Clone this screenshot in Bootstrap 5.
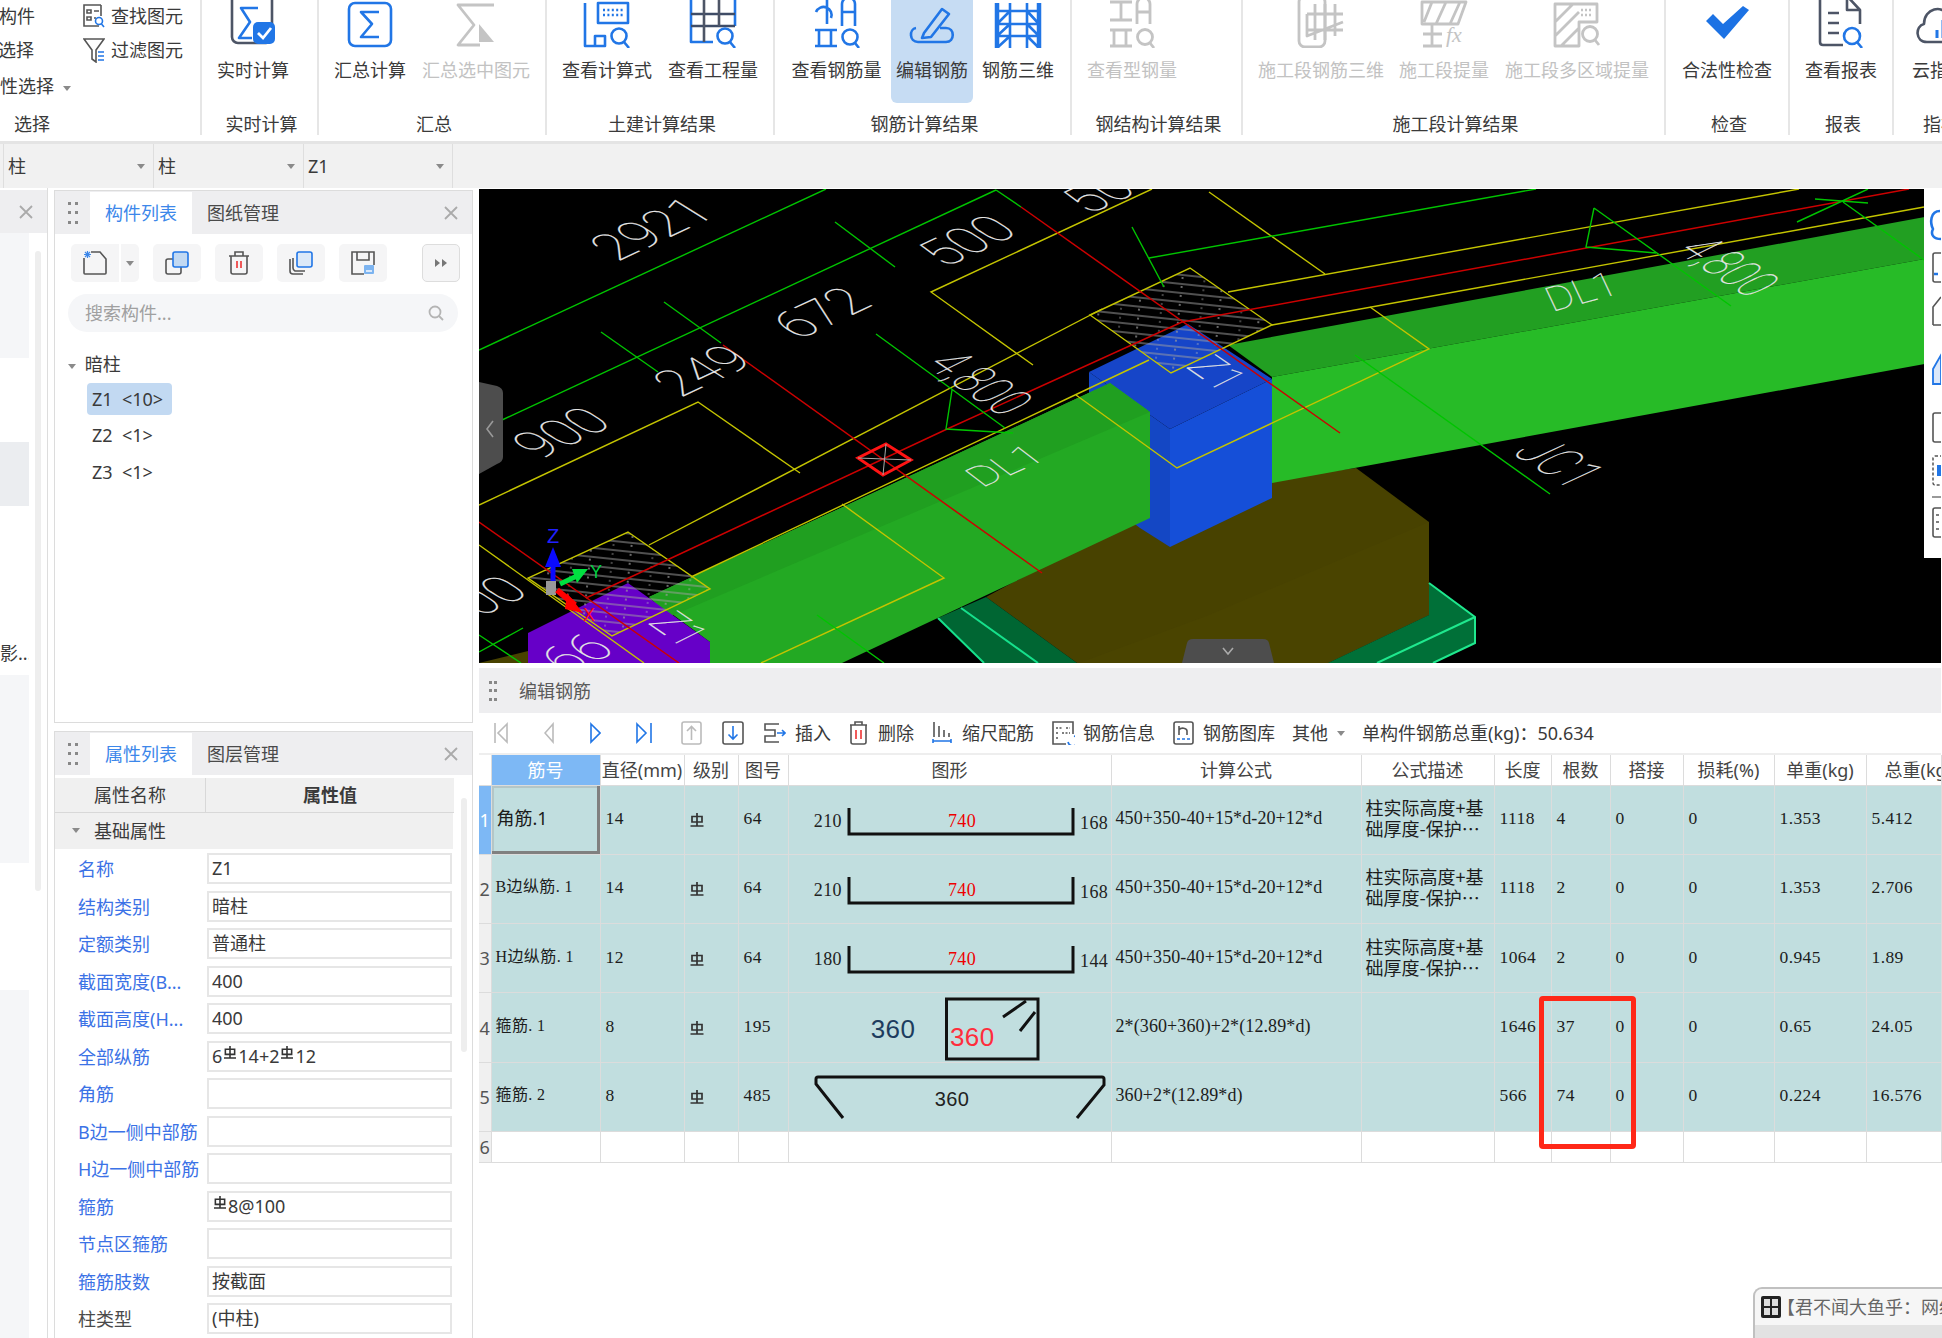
<!DOCTYPE html>
<html lang="zh-CN">
<head>
<meta charset="utf-8">
<title>编辑钢筋</title>
<link href="https://cdn.jsdelivr.net/npm/bootstrap@5.3.0/dist/css/bootstrap.min.css" rel="stylesheet">
<style>
html,body{margin:0;height:100%;background:#fff}
.app{width:1942px;height:1338px;overflow:hidden;position:relative;font-family:"Noto Sans","Noto Sans CJK SC",sans-serif;font-size:18px;line-height:24px;color:#3a3a3a;background:#fff}
svg{display:block;flex-shrink:0;overflow:hidden}
.st{fill:none;stroke:#2176e6;stroke-width:2.6;stroke-linejoin:round}
.sd{fill:none;stroke:#4d5566;stroke-width:2.6;stroke-linejoin:round}
.sg{fill:none;stroke:#c4c4c4;stroke-width:2.8;stroke-linejoin:round}
.sb{fill:none;stroke:#2176e6;stroke-width:1.6}
.sk{fill:none;stroke:#555;stroke-width:1.6}
.sm{fill:none;stroke:#bbb;stroke-width:1.6}
/* ribbon */
.rib{height:144px;border-bottom:3px solid #e4e4e4;overflow:hidden;background:#fff}
.rg-grp{height:135px;border-right:2px solid #e6e6e6;flex-shrink:0}
.rg-body{height:103px}
.rg-lab{height:32px;line-height:32px;margin-top:5px;text-align:center;padding-left:4px}
.rg-lab0{text-align:left;padding-left:14px}
.rb-it{white-space:nowrap;height:103px;flex-shrink:0}
.rb-it span{margin-top:10px;line-height:24px}
.rb-off{color:#c2c2c2}
.rb-on{background:#c6dcf3;border-radius:0 0 6px 6px}
.g0{width:202px}.g1{width:117px}.g2{width:228px}.g3{width:228px;}.g4{width:297px}.g5{width:171px}.g6{width:423px}.g7{width:124px}.g8{width:104px}.g9{width:100px;border-right:0}
.p3{padding-left:9px}.p4{padding-left:7px}.p5{padding-left:10px}.p6{padding-left:13px}
.wi-102{width:102px}.wi-110{width:110px}.wi-109{width:109px}.wi-82{width:82px}.wi-90{width:90px}.wi-g100{width:100px}.wi-130{width:130px}.wi-116{width:116px}.wi-150{width:150px}.wi-fill{width:100%}
.sel-c1{width:83px;white-space:nowrap}
.sel-c1>div:nth-child(1){height:33px;line-height:33px;margin-left:-1px}
.sel-c1>div:nth-child(2){height:35px;line-height:35px;margin-left:-2px}
.sel-c1>div:nth-child(3){height:37px;line-height:37px;margin-left:-18px}
.sel-c2>div{gap:6px;white-space:nowrap}
.sel-c2>div:nth-child(1){height:31px}
.sel-c2>div:nth-child(2){height:37px}
.tri{display:inline-block;width:0;height:0;border-left:4px solid transparent;border-right:4px solid transparent;border-top:5px solid #8a8a8a;vertical-align:middle}
/* combo bar */
.combo{height:44px;background:#f1f1f1;padding-left:3px}
.combo-it{width:150px;border-left:1px solid #dedede;padding:0 8px 0 4px;line-height:44px}
.combo-it:last-child{border-right:1px solid #dedede}
/* main */
.main-w{height:1150px}
.stub{width:48px;border-right:1px solid #ddd;flex-shrink:0}
.stub-h{height:43px;margin-top:2px;background:#eeeef0;padding-right:14px}
.stub-b{height:1105px}
.stub-col{width:29px;font-size:18px}
.sc1{height:125px;background:#f5f6f8}.sc2{height:84px}.sc3{height:64px;background:#ebedf0}.sc4{height:169px;line-height:295px;text-align:right;white-space:nowrap;overflow:hidden}.sc5{height:188px;background:#f5f6f8}.sc6{height:127px}.sc7{height:348px;background:#f5f6f8}
.stub-sb{width:6px;height:640px;margin:18px 0 0 6px;background:#eeeeee;border-radius:3px}
.mid{width:419px;margin-left:6px;flex-shrink:0}
.pan{border:1px solid #dcdcdc;margin-top:2px}
.pan-a{height:533px}
.pan-b{height:620px;margin-top:8px;border-bottom:0}
.pan-h{height:43px;background:#eeeef0;padding-right:14px}
.grip{width:35px}
.tab-a,.tab-n{width:102px;text-align:center;line-height:43px;margin-top:1px}
.tab-a{background:#fff;color:#3c87ea}
.tab-n{color:#4a4a4a}
.tbtns{padding:10px 0 0 16px;height:53px}
.pbt{height:38px;width:48px;background:#f5f5f6;border-radius:5px;margin-right:14px;flex-shrink:0}
.pbt-n{margin-right:2px;border-radius:5px 0 0 5px}
.pbt-c{width:18px;border-radius:0 5px 5px 0;margin-right:14px}
.pbt-r{width:38px;margin:0 0 0 21px;border:1px solid #ddd}
.srch{margin:7px 14px 0 13px;height:38px;border-radius:19px;background:#f5f6f8;color:#a0a0a0;padding:0 14px 0 17px}
.tree{padding-top:16px;padding-left:13px}
.tree-r{height:32px;line-height:32px}
.tree-i{margin-left:19px;height:32px;line-height:32px;padding:0 5px;white-space:pre;display:inline-block;border-radius:4px}
.tree-s{background:#c2d9f2;width:85px;margin-top:3px}
.tree-n{margin-top:4px;display:block;width:85px}
.tree-n+.tree-n{margin-top:5px}
.pg-head{height:35px;background:#f0f0f0;margin-top:3px;width:399px;border-bottom:1px solid #d8d8d8}
.pg-h1{width:151px;text-align:center;line-height:34px;border-right:1px solid #d8d8d8}
.pg-h2{flex:1;text-align:center;line-height:34px;font-weight:600}
.pg-grp{height:36px;width:398px;background:#f0f0f0;line-height:36px;padding-left:17px}
.pg-grp .tri{margin-right:14px;position:relative;top:-3px}
.pg-row{height:37.5px;width:398px}
.pg-first{margin-top:4px}
.pg-l{width:152px;padding-left:23px;color:#3b72e6;white-space:nowrap;line-height:33px}
.pg-dk{color:#4a4a4a}
.pg-v{width:245px;height:31px;border:2px solid #e6e6e6;line-height:27px;padding-left:3px;white-space:nowrap}
.pg-sb{width:6px;height:254px;background:#eee;border-radius:3px;position:absolute;left:406px;top:20px}
.pg-wrap{position:relative}
.rs{display:inline-block;vertical-align:4px;margin:0 1px}
/* right column */
.right{width:1462px;margin-left:6px;flex-shrink:0;position:relative}
.cv-w{height:474px;margin-top:1px;position:relative;background:#000}
.palette{position:absolute;right:0;top:0;width:17px;height:369px;background:#fff}
.rb-h{height:45px;margin-top:5px;background:#eeeef0;color:#5a5a5a}
.rb-h .grip2{width:40px;padding-left:10px}
.rbar{height:42px;border-bottom:2px solid #eee;white-space:nowrap}
.rbar>:nth-child(1){margin-left:15px}.rbar>:nth-child(2){margin-left:36px}.rbar>:nth-child(3){margin-left:36px}.rbar>:nth-child(4){margin-left:35px}.rbar>:nth-child(5){margin-left:29px}.rbar>:nth-child(6){margin-left:20px}.rbar>:nth-child(7){margin-left:20px}.rbar>:nth-child(8){margin-left:9px}.rbar>:nth-child(9){margin-left:18px}.rbar>:nth-child(10){margin-left:10px}.rbar>:nth-child(11){margin-left:18px}.rbar>:nth-child(12){margin-left:10px}.rbar>:nth-child(13){margin-left:18px}.rbar>:nth-child(14){margin-left:8px}.rbar>:nth-child(15){margin-left:18px}.rbar>:nth-child(16){margin-left:9px}.rbar>:nth-child(17){margin-left:17px}.rbar>:nth-child(18){margin-left:9px}.rbar>:nth-child(19){margin-left:17px}
.grid-w{position:relative}
.rgt{table-layout:fixed;width:1462px;border-collapse:collapse;margin:0}
.rgt>tbody>tr>td,.rgt>thead>tr>th{padding:0;border:0;border-right:1.5px solid #dcdcdc;border-bottom:1.5px solid #dcdcdc;overflow:hidden;white-space:nowrap;font-weight:400;vertical-align:middle;box-shadow:none}
.rgt>thead>tr>th{background:#fff;height:30px;text-align:center;line-height:28px;color:#444}
.rgt>thead>tr>th.hc{background:#7db8f5;color:#fff}
.rgt>thead>tr>th.tl{text-align:left;padding-left:18px}
.rgt>tbody>tr.dt>td{background:#c1dedf;height:69.33px;color:#1c1c1c;font-family:"Liberation Serif","Noto Sans CJK SC",serif;font-size:17.5px;letter-spacing:.4px;padding-left:5px;line-height:20px;padding-bottom:3px}
.rgt>tbody>tr.em>td{background:#fff;height:31px}
.rgt>tbody>tr>td.rh{background:#f0f0f0;padding:0;text-align:center;font-family:"Noto Sans",sans-serif;font-size:18px;letter-spacing:0;color:#555;overflow:hidden}
.rgt>tbody>tr>td.rh-on{background:#7db8f5;color:#fff}
.rgt>tbody>tr>td.selc{font-family:"Noto Sans","Noto Sans CJK SC",sans-serif;font-size:18px;letter-spacing:0;box-shadow:inset -3px -3px 0 #808080,inset 2px 2px 0 #b4c6c7}
.rgt>tbody>tr>td.nm{font-family:"Liberation Serif","Noto Sans CJK SC",serif;font-size:16px;letter-spacing:.4px;padding-left:4px}
.rgt>tbody>tr>td.fm{font-size:18px;letter-spacing:.1px;padding-left:4px}
.rgt>tbody>tr>td.ds{font-family:"Noto Sans CJK SC",sans-serif;font-size:18px;letter-spacing:0;line-height:21px;padding-left:4px}
.rgt>tbody>tr>td.fg{padding:0}
.c0{width:12px}.c1{width:109px}.c2{width:84px}.c3{width:54px}.c4{width:50px}.c5{width:323px}.c6{width:250px}.c7{width:133px}.c8{width:57px}.c9{width:59px}.c10{width:73px}.c11{width:91px}.c12{width:92px}.c13{width:75px}
.redbox{position:absolute;left:1060px;top:241px;width:97px;height:153px;border:5px solid #ff2818;border-radius:4px}
.toast-b{position:absolute;left:1753px;top:1287px;width:189px;height:51px;background:#e2e2e2;border:2px solid #c0c0c0;border-right:0;border-bottom:0;border-top-left-radius:9px;overflow:hidden}
.toast-t{height:36px;background:#f6f6f6;padding-left:6px;white-space:nowrap;color:#666;line-height:36px}
.toast-t span{margin-left:-4px}
.cad{fill:#e4e4e4;stroke:#e4e4e4;stroke-width:.03;font-family:"Roboto","Liberation Sans",sans-serif;font-weight:100;font-size:10px}
.fgt{font-family:"Liberation Serif",serif;font-size:18px;fill:#222}
.fgr{font-family:"Liberation Serif",serif;font-size:18px;fill:#ee0000}
.ln{fill:none}
.ye{stroke:#c4c400;stroke-width:1.4}.rd{stroke:#cc0000;stroke-width:1.5}.gr{stroke:#00c400;stroke-width:1.4}
</style>
</head>
<body>
<div class="app">

<div class="rib d-flex">
  <div class="rg-grp g0">
    <div class="rg-body d-flex">
      <div class="sel-c1 overflow-hidden"><div>构件</div><div>选择</div><div>属性选择 <span class="tri ms-1"></span></div></div>
      <div class="sel-c2">
        <div class="d-flex align-items-center"><svg width="22" height="24" viewBox="0 0 22 24"><path class="sk" d="M5 1H1V22H16M18 1H5M18 1V12"/><path class="sk" d="M4 6h4v3H4zM4 13h4v3H4zM11 7h5M11 14h2"/><circle class="sb" cx="16" cy="17" r="3.5"/><path class="sb" d="M18.5 20l2.5 3"/></svg><span>查找图元</span></div>
        <div class="d-flex align-items-center"><svg width="22" height="26" viewBox="0 0 22 26"><path class="sk" d="M1 2H21L13 13V25L9 22V13Z"/><path class="sb" d="M15 15h6M15 19h6M15 23h6"/></svg><span>过滤图元</span></div>
      </div>
    </div>
    <div class="rg-lab rg-lab0">选择</div>
  </div>

  <div class="rg-grp g1">
    <div class="rg-body d-flex">
      <div class="rb-it wi-102 d-flex flex-column align-items-center"><svg width="48" height="48" viewBox="0 0 48 48"><rect class="sd" x="3" y="-6" width="40" height="49" rx="6"/><path class="st" d="M29 8H12L21 22L10 38H23"/><rect x="24" y="22" width="22" height="22" rx="5" fill="#2176e6"/><path d="M29 33l5 5 8-10" fill="none" stroke="#fff" stroke-width="2.8"/></svg><span>实时计算</span></div>
    </div>
    <div class="rg-lab">实时计算</div>
  </div>

  <div class="rg-grp g2">
    <div class="rg-body d-flex">
      <div class="rb-it wi-102 d-flex flex-column align-items-center"><svg width="48" height="48" viewBox="0 0 48 48"><rect class="st" x="3" y="3" width="42" height="43" rx="6"/><path class="st" d="M33 12H15L26 24L15 37H33"/></svg><span>汇总计算</span></div>
      <div class="rb-it wi-110 rb-off d-flex flex-column align-items-center"><svg width="48" height="48" viewBox="0 0 48 48"><path class="sg" d="M42 5H6L22 25L6 45H28"/><path d="M27 24L42 42H27Z" fill="#c4c4c4"/></svg><span>汇总选中图元</span></div>
    </div>
    <div class="rg-lab">汇总</div>
  </div>

  <div class="rg-grp g3">
    <div class="rg-body d-flex p3">
      <div class="rb-it wi-102 d-flex flex-column align-items-center"><svg width="48" height="48" viewBox="0 0 48 48"><path class="st" d="M2 3V46H22V36H12V46"/><rect class="st" x="15" y="3" width="30" height="20"/><path d="M20 10h20M20 15h20" stroke="#2176e6" stroke-width="2.6" stroke-dasharray="2 2.4"/><circle class="st" cx="36" cy="36" r="7.5"/><path class="st" d="M41 42l5 6"/></svg><span>查看计算式</span></div>
      <div class="rb-it wi-110 d-flex flex-column align-items-center"><svg width="48" height="48" viewBox="0 0 48 48"><path class="st" d="M2 -2V42H24M46 -2V26M2 -2H46"/><path d="M2 14H46M2 26H46" fill="none" stroke="#3f4c66" stroke-width="2.6"/><path class="sd" d="M15 -2V42M30 -2V26"/><circle class="st" cx="36" cy="36" r="7.5"/><path class="st" d="M41 42l5 6"/></svg><span>查看工程量</span></div>
    </div>
    <div class="rg-lab">土建计算结果</div>
  </div>

  <div class="rg-grp g4">
    <div class="rg-body d-flex p4">
      <div class="rb-it wi-109 d-flex flex-column align-items-center"><svg width="48" height="48" viewBox="0 0 48 48"><path class="st" d="M14 0V24M3 12A8 8 0 1 1 18 18"/><path class="st" d="M29 26V4A6 6 0 0 1 42 4V26M29 12H42"/><path class="st" d="M2 30H24M6 30V46M18 30V46M2 46H24"/><circle class="st" cx="37" cy="37" r="7.5"/><path class="st" d="M42 43l4 5"/></svg><span>查看钢筋量</span></div>
      <div class="rb-it wi-82 rb-on d-flex flex-column align-items-center"><svg width="48" height="48" viewBox="0 0 48 48"><path class="st" d="M8 28C1 29 1 42 10 42H38C47 42 47 28 38 28H32"/><path class="st" d="M16 33L34 9L41 14L23 37L14 38Z"/></svg><span>编辑钢筋</span></div>
      <div class="rb-it wi-90 d-flex flex-column align-items-center"><svg width="48" height="48" viewBox="0 0 48 48"><path d="M3 3V48M45 3V48" stroke="#2176e6" stroke-width="4.5"/><path class="st" d="M3 11H45M3 24H45M3 36H45M16 3V48M33 3V48M3 24L16 11M45 24L33 11M3 36L16 24M45 36L33 24M3 48L16 36M45 48L33 36"/></svg><span>钢筋三维</span></div>
    </div>
    <div class="rg-lab">钢筋计算结果</div>
  </div>

  <div class="rg-grp g5">
    <div class="rg-body d-flex p5">
      <div class="rb-it wi-g100 rb-off d-flex flex-column align-items-center"><svg width="48" height="48" viewBox="0 0 48 48"><path class="sg" d="M2 2H24M13 2V20M2 20H24M29 24V4A6 6 0 0 1 42 4V24M29 12H42M2 30H24M6 30V46M18 30V46M2 46H24"/><circle class="sg" cx="37" cy="37" r="7.5"/><path class="sg" d="M42 43l4 5"/></svg><span>查看型钢量</span></div>
    </div>
    <div class="rg-lab">钢结构计算结果</div>
  </div>

  <div class="rg-grp g6">
    <div class="rg-body d-flex p6">
      <div class="rb-it wi-130 rb-off d-flex flex-column align-items-center"><svg width="48" height="48" viewBox="0 0 48 48"><rect class="sg" x="2" y="-4" width="26" height="51" rx="6" stroke-width="4"/><path class="sg" d="M10 14H46M10 30H46M18 4V40M28 4V40M38 4V36M10 14V36L46 22"/></svg><span>施工段钢筋三维</span></div>
      <div class="rb-it wi-116 rb-off d-flex flex-column align-items-center"><svg width="48" height="48" viewBox="0 0 48 48"><path class="sg" d="M2 2H46L38 24H2ZM12 2L4 22M26 2L16 24M40 2L30 24M3 34H22M12 24V46M3 46H22"/><text x="26" y="42" font-family="Liberation Serif,serif" font-style="italic" font-size="22" fill="#c4c4c4">fx</text></svg><span>施工段提量</span></div>
      <div class="rb-it wi-150 rb-off d-flex flex-column align-items-center"><svg width="48" height="48" viewBox="0 0 48 48"><path class="sg" d="M2 4H44V22H26V46H2ZM2 22L20 4M2 36L26 12M8 46L26 28"/><path d="M28 10h12M28 15h12" stroke="#c4c4c4" stroke-width="2.6" stroke-dasharray="2 2"/><circle class="sg" cx="37" cy="34" r="7.5"/><path class="sg" d="M42 40l4 5"/></svg><span>施工段多区域提量</span></div>
    </div>
    <div class="rg-lab">施工段计算结果</div>
  </div>

  <div class="rg-grp g7">
    <div class="rg-body d-flex">
      <div class="rb-it wi-fill d-flex flex-column align-items-center"><svg width="48" height="48" viewBox="0 0 48 48"><path d="M3 21L10 14L20 24L40 6L46 10L21 39Z" fill="#1c72e4"/></svg><span>合法性检查</span></div>
    </div>
    <div class="rg-lab">检查</div>
  </div>

  <div class="rg-grp g8">
    <div class="rg-body d-flex">
      <div class="rb-it wi-fill d-flex flex-column align-items-center"><svg width="48" height="48" viewBox="0 0 48 48"><path class="sd" d="M3 -4H30L43 10V24M30 -4V10H43M3 -4V42Q3 45 6 45H26"/><path class="sd" d="M11 13H22M11 23H22M11 33H22"/><circle class="st" cx="35" cy="36" r="8"/><path class="st" d="M40 42l5 6"/></svg><span>查看报表</span></div>
    </div>
    <div class="rg-lab">报表</div>
  </div>

  <div class="rg-grp g9">
    <div class="rg-body d-flex">
      <div class="rb-it wi-90 d-flex flex-column align-items-center"><svg width="48" height="48" viewBox="0 0 48 48"><path class="sd" d="M12 42C0 42 0 26 9 24C9 8 28 4 33 16C46 16 48 42 34 42Z"/><path d="M22 38V30M28 38V20M34 38V26" stroke="#2176e6" stroke-width="3"/></svg><span>云指标</span></div>
    </div>
    <div class="rg-lab wi-90">指标</div>
  </div>
</div>

<div class="combo d-flex">
  <div class="combo-it d-flex justify-content-between align-items-center"><span>柱</span><span class="tri"></span></div>
  <div class="combo-it d-flex justify-content-between align-items-center"><span>柱</span><span class="tri"></span></div>
  <div class="combo-it d-flex justify-content-between align-items-center"><span>Z1</span><span class="tri"></span></div>
</div>

<div class="main-w d-flex">
  <div class="stub">
    <div class="stub-h d-flex align-items-center justify-content-end"><svg width="14" height="14" viewBox="0 0 14 14"><path d="M1 1L13 13M13 1L1 13" stroke="#aaa" stroke-width="1.8"/></svg></div>
    <div class="stub-b d-flex">
      <div class="stub-col">
        <div class="sc1"></div><div class="sc2"></div><div class="sc3"></div><div class="sc4">影...</div><div class="sc5"></div><div class="sc6"></div><div class="sc7"></div>
      </div>
      <div class="stub-sb"></div>
    </div>
  </div>

  <div class="mid">
    <div class="pan pan-a">
      <div class="pan-h d-flex align-items-center">
        <div class="grip d-flex justify-content-center"><svg width="10" height="24" viewBox="0 0 10 24" fill="#888"><rect x="0" y="1" width="3" height="3"/><rect x="7" y="1" width="3" height="3"/><rect x="0" y="10" width="3" height="3"/><rect x="7" y="10" width="3" height="3"/><rect x="0" y="20" width="3" height="3"/><rect x="7" y="20" width="3" height="3"/></svg></div>
        <div class="tab-a">构件列表</div><div class="tab-n">图纸管理</div>
        <div class="ms-auto"><svg width="14" height="14" viewBox="0 0 14 14"><path d="M1 1L13 13M13 1L1 13" stroke="#aaa" stroke-width="1.8"/></svg></div>
      </div>
      <div class="tbtns d-flex">
        <div class="pbt pbt-n d-flex align-items-center justify-content-center"><svg width="24" height="24" viewBox="0 0 24 24"><path class="sk" d="M1 7V22Q1 23 2 23H22Q23 23 23 22V8L17 1H8"/><path d="M2 1l5 5M7 1L2 6M4.500 0v7M1 3.500h7" stroke="#3c87ea" stroke-width="1.2"/></svg></div>
        <div class="pbt pbt-c d-flex align-items-center justify-content-center"><span class="tri"></span></div>
        <div class="pbt d-flex align-items-center justify-content-center"><svg width="24" height="24" viewBox="0 0 24 24"><rect class="sk" x="1" y="8" width="15" height="15" rx="2"/><rect x="8" y="1" width="15" height="15" rx="2" fill="#c2d9f2" stroke="#2176e6" stroke-width="1.6"/></svg></div>
        <div class="pbt d-flex align-items-center justify-content-center"><svg width="22" height="24" viewBox="0 0 22 24"><path class="sk" d="M1 5H21M7 5V1H15V5M3 5V21Q3 23 5 23H17Q19 23 19 21V5"/><path d="M9 10V17M13 10V17" stroke="#e33" stroke-width="1.6"/></svg></div>
        <div class="pbt d-flex align-items-center justify-content-center"><svg width="24" height="24" viewBox="0 0 24 24"><path class="sk" d="M1 8V20Q1 23 4 23H14M4 7V17Q4 19 6 20H16"/><rect x="8" y="1" width="15" height="15" rx="2" fill="#dce9f8" stroke="#2176e6" stroke-width="1.6"/></svg></div>
        <div class="pbt d-flex align-items-center justify-content-center"><svg width="24" height="24" viewBox="0 0 24 24"><path class="sk" d="M13 23H1V1H23V14M6 1V9H18V1"/><rect x="13" y="14" width="10" height="9" rx="1" fill="#7db4f0"/><path d="M15 20h6" stroke="#fff" stroke-width="1.4"/></svg></div>
        <div class="pbt pbt-r d-flex align-items-center justify-content-center"><svg width="12" height="10" viewBox="0 0 12 10" fill="#777"><path d="M0 1L5 5L0 9ZM7 1L12 5L7 9Z"/></svg></div>
      </div>
      <div class="srch d-flex align-items-center justify-content-between"><span>搜索构件...</span><svg width="16" height="16" viewBox="0 0 16 16"><circle cx="7" cy="7" r="5.500" fill="none" stroke="#b4b4b4" stroke-width="1.800"/><path d="M11 11l4 4" stroke="#b4b4b4" stroke-width="1.800"/></svg></div>
      <div class="tree">
        <div class="tree-r"><span class="tri me-1"></span> 暗柱</div>
        <div><span class="tree-i tree-s">Z1  &lt;10&gt;</span></div>
        <span class="tree-i tree-n">Z2  &lt;1&gt;</span>
        <span class="tree-i tree-n">Z3  &lt;1&gt;</span>
      </div>
    </div>

    <div class="pan pan-b">
      <div class="pan-h d-flex align-items-center">
        <div class="grip d-flex justify-content-center"><svg width="10" height="24" viewBox="0 0 10 24" fill="#888"><rect x="0" y="1" width="3" height="3"/><rect x="7" y="1" width="3" height="3"/><rect x="0" y="10" width="3" height="3"/><rect x="7" y="10" width="3" height="3"/><rect x="0" y="20" width="3" height="3"/><rect x="7" y="20" width="3" height="3"/></svg></div>
        <div class="tab-a">属性列表</div><div class="tab-n">图层管理</div>
        <div class="ms-auto"><svg width="14" height="14" viewBox="0 0 14 14"><path d="M1 1L13 13M13 1L1 13" stroke="#aaa" stroke-width="1.8"/></svg></div>
      </div>
      <div class="pg-wrap">
        <div class="pg-sb"></div>
        <div class="pg-head d-flex"><div class="pg-h1">属性名称</div><div class="pg-h2">属性值</div></div>
        <div class="pg-grp"><span class="tri"></span>基础属性</div>
        <div class="pg-row pg-first d-flex"><div class="pg-l">名称</div><div class="pg-v">Z1</div></div>
        <div class="pg-row d-flex"><div class="pg-l">结构类别</div><div class="pg-v">暗柱</div></div>
        <div class="pg-row d-flex"><div class="pg-l">定额类别</div><div class="pg-v">普通柱</div></div>
        <div class="pg-row d-flex"><div class="pg-l">截面宽度(B...</div><div class="pg-v">400</div></div>
        <div class="pg-row d-flex"><div class="pg-l">截面高度(H...</div><div class="pg-v">400</div></div>
        <div class="pg-row d-flex"><div class="pg-l">全部纵筋</div><div class="pg-v">6<svg class="rs" width="14" height="13" viewBox="0 0 14 14"><use href="#rbs"/></svg>14+2<svg class="rs" width="14" height="13" viewBox="0 0 14 14"><use href="#rbs"/></svg>12</div></div>
        <div class="pg-row d-flex"><div class="pg-l">角筋</div><div class="pg-v"></div></div>
        <div class="pg-row d-flex"><div class="pg-l">B边一侧中部筋</div><div class="pg-v"></div></div>
        <div class="pg-row d-flex"><div class="pg-l">H边一侧中部筋</div><div class="pg-v"></div></div>
        <div class="pg-row d-flex"><div class="pg-l">箍筋</div><div class="pg-v"><svg class="rs" width="14" height="13" viewBox="0 0 14 14"><use href="#rbs"/></svg>8@100</div></div>
        <div class="pg-row d-flex"><div class="pg-l">节点区箍筋</div><div class="pg-v"></div></div>
        <div class="pg-row d-flex"><div class="pg-l">箍筋肢数</div><div class="pg-v">按截面</div></div>
        <div class="pg-row d-flex"><div class="pg-l pg-dk">柱类型</div><div class="pg-v">(中柱)</div></div>
      </div>
    </div>
  </div>

  <div class="right">
    <div class="cv-w">
      <svg width="1462" height="474" viewBox="0 0 1462 474">
        <defs>
          <symbol id="rbs" viewBox="0 0 14 14"><path d="M7 0V13M2 3.500h10v5.500H2zM0.500 13h13" fill="none" stroke="#333" stroke-width="1.700"/></symbol>
          <pattern id="hat" width="40" height="9" patternUnits="userSpaceOnUse" patternTransform="rotate(6)"><path d="M0 3H40" stroke="#a0a0a0" stroke-width="1.100"/><circle cx="11" cy="7" r=".7" fill="#bbb"/><circle cx="29" cy="6" r=".9" fill="#999"/></pattern>
        </defs>
        <rect width="1462" height="474" fill="#000"/>
        <polygon points="507,408 671,320 793,290 877,279 950,333 950,426 849,474 598,474" fill="#484200"/>
        <polygon points="950,333 950,426 849,474 600,474 730,426" fill="#4a4400"/>
        <polygon points="459,429 507,408 598,474 505,474" fill="#006633"/>
        <path d="M459,429L505,474M482,419L559,474" stroke="#16e08c" stroke-width="2" fill="none"/>
        <polygon points="950,394 996,428 996,454 954,474 849,474 950,426" fill="#007038"/>
        <path d="M950,394L996,428V454L954,474M996,428L898,474" stroke="#1fe88e" stroke-width="2" fill="none"/>
        <polygon points="749,156 1462,25 1462,67 793,188" fill="#229f22"/>
        <polygon points="793,188 1462,67 1462,172 793,294" fill="#27bb27"/>
        <polygon points="610,183 691,240 691,358 661,339 610,300" fill="#1447c4"/>
        <polygon points="691,240 793,190 793,309 691,358" fill="#154fd8"/>
        <polygon points="610,183 709,135 793,190 691,240" fill="#1645c8"/>
        <polygon points="170,408 631,194 671,223 671,329 363,474 231,474 231,453" fill="#23a923"/>
        <polygon points="170,408 631,194 671,223 190,428" fill="#209f20"/>
        <polygon points="149,394 231,453 231,474 49,474 49,444" fill="#6600c8"/>
        <polygon points="0,474 49,462 49,474" fill="#484200"/>

        <polygon points="149,343 231,400 133,447 49,389" fill="url(#hat)"/>
        <polygon points="711,79 793,136 692,184 611,126" fill="url(#hat)"/>
        <g class="ln ye">
          <polygon points="149,343 231,400 133,447 49,389"/>
          <polygon points="711,79 793,136 692,184 611,126"/>
          <path d="M170,356L623,120"/><path d="M749,103L1320,0"/>
          <path d="M212,388L596,206L670,171"/><path d="M793,136L1445,18"/>
          <path d="M0,316L219,213L321,284"/>
          <path d="M673,0L452,103L554,176"/>
          <path d="M363,315L465,389L282,474"/>
          <path d="M597,206L698,279L950,160L891,118"/>
          <path d="M730,3L846,85"/>
          <path d="M0,356L165,474"/>
        </g>
        <g class="ln rd">
          <path d="M107,409L466,241L703,133L1430,0"/>
          <path d="M0,333L200,474"/>
          <path d="M244,156L563,384"/>
          <path d="M542,18L861,244"/>
        </g>
        <g class="ln gr">
          <path d="M0,161L347,0"/><path d="M23,231L517,1"/>
          <path d="M356,33L416,78"/><path d="M185,113L242,154"/><path d="M122,143L179,183"/>
          <path d="M517,1L542,18"/>
          <path d="M653,38L685,98M670,69L1057,0"/>
          <path d="M473,201L467,240L534,244M397,145L526,239"/>
          <path d="M1115,19L1107,58L1177,64M1115,19L1252,117"/>
          <path d="M1336,10L1389,14M1318,33L1389,0M1364,13L1445,71"/>
          <path d="M876,166L1071,305"/>
          <path d="M338,426L405,474"/>
          <path d="M44,439L0,463M0,446L42,474"/>
        </g>
        <polygon points="407,255 432,271 404,286 379,269" fill="none" stroke="#ff1414" stroke-width="3"/>
        <path d="M407,255L404,286M379,269L432,271" stroke="#aaa" stroke-width="1" fill="none"/>

        <g class="cad">
          <text transform="matrix(4.6 -2.15 4.5 2.8 138 73)">2921</text>
          <text transform="matrix(4.6 -2.15 4.5 2.8 466 79)">500</text>
          <text transform="matrix(4.6 -2.15 4.5 2.8 320 151)">672</text>
          <text transform="matrix(4.6 -2.15 4.5 2.8 201 209)">249</text>
          <text transform="matrix(4.6 -2.15 4.5 2.8 60 271)">900</text>
          <text transform="matrix(4.6 -2.15 4.5 2.8 2 428)">00</text>
          <text transform="matrix(4.6 -2.15 4.5 2.8 610 26)">500</text>
          <text transform="matrix(3.3 2.2 -4.9 2.4 445 176)">4,800</text>
          <text transform="matrix(3.1 2 -4.9 2.4 1196 62)">4,800</text>
          <text transform="matrix(3.8 -1.7 2.9 2.2 503 299)">DL1</text>
          <text transform="matrix(4 -1.1 1.5 3.2 1073 123)">DL1</text>
          <text transform="matrix(3.4 2.1 -5.4 2.5 1032 264)">JC1</text>
          <text transform="matrix(3.2 2.2 -4 2 706 178)">Z1</text>
          <text transform="matrix(3.2 2.2 -4 2 168 434)">Z1</text>
          <text transform="matrix(4.6 -2.15 4.5 2.8 88 486)">66</text>
        </g>
        <path d="M74,396V372" stroke="#0a0aff" stroke-width="5"/><path d="M66,378L74,358L82,378Z" fill="#0a0aff"/>
        <rect x="67" y="392" width="10" height="14" fill="#999"/>
        <path d="M81,395L100,386" stroke="#00e040" stroke-width="5"/><path d="M93,380L109,380L98,394Z" fill="#00e040"/>
        <path d="M78,401L96,416" stroke="#ff0000" stroke-width="6"/><path d="M88,404L104,424L86,420Z" fill="#ff0000"/>
        <text x="68" y="354" font-family="Liberation Sans,sans-serif" font-size="20" fill="#2020ff">Z</text>
        <text x="111" y="389" font-family="Liberation Sans,sans-serif" font-size="18" fill="#00d040">Y</text>
        <text x="104" y="432" font-family="Liberation Sans,sans-serif" font-size="18" fill="#ff1010">X</text>
        <path d="M0,193L18,197Q24,199 24,204V268Q24,273 18,275L0,285Z" fill="#4d4d4d"/>
        <path d="M14,232L8,240L14,248" fill="none" stroke="#999" stroke-width="1.600"/>
        <path d="M703,474L708,454Q709,450 714,450H784Q789,450 790,454L795,474Z" fill="#4d4d4d"/>
        <path d="M744,459L749,465L754,459" fill="none" stroke="#aaa" stroke-width="1.600"/>
      </svg>
      <div class="palette">
        <svg width="17" height="369" viewBox="0 0 17 369"><path class="st" d="M16 22C6 22 6 34 9 40C6 46 10 50 17 50" stroke-width="1.800"/><rect class="sk" x="9" y="64" width="16" height="29" rx="2"/><path d="M10 85h4" stroke="#2176e6" stroke-width="2.500"/><path class="sk" d="M9 136V118L17 108M9 136H17"/><path d="M9 180L17 166V195H9Z" fill="#dbe8fa" stroke="#2176e6" stroke-width="1.800"/><rect class="sk" x="9" y="224" width="16" height="29" rx="2"/><rect x="9" y="267" width="16" height="29" rx="2" fill="none" stroke="#555" stroke-dasharray="3 2" stroke-width="1.500"/><rect x="13" y="276" width="6" height="11" fill="#2176e6"/><path d="M8 308H17" stroke="#777" stroke-width="1.500"/><rect class="sk" x="9" y="319" width="16" height="29" rx="2"/><path d="M12 326h3M12 333h3M12 340h3" stroke="#555" stroke-width="1.500"/></svg>
      </div>
    </div>

    <div class="rb-h d-flex align-items-center">
      <div class="grip2"><svg width="8" height="20" viewBox="0 0 8 20" fill="#888"><rect x="0" y="0" width="3" height="3"/><rect x="5" y="0" width="3" height="3"/><rect x="0" y="8" width="3" height="3"/><rect x="5" y="8" width="3" height="3"/><rect x="0" y="17" width="3" height="3"/><rect x="5" y="17" width="3" height="3"/></svg></div>
      <div>编辑钢筋</div>
    </div>
    <div class="rbar d-flex align-items-center">
      <svg width="14" height="22" viewBox="0 0 14 22"><path class="sm" d="M1 1V21M13 2L4 11L13 20Z"/></svg>
      <svg width="10" height="22" viewBox="0 0 10 22"><path class="sm" d="M9 2L1 11L9 20Z"/></svg>
      <svg width="11" height="22" viewBox="0 0 11 22"><path class="sb" d="M1 2L10 11L1 20Z"/></svg>
      <svg width="16" height="22" viewBox="0 0 16 22"><path class="sb" d="M1 2L10 11L1 20ZM15 1V21"/></svg>
      <svg width="21" height="24" viewBox="0 0 21 24"><rect class="sm" x="1" y="1" width="19" height="22" rx="2"/><path class="sm" d="M10.500 19V6M6 10l4.500-4.500L15 10"/></svg>
      <svg width="22" height="24" viewBox="0 0 22 24"><rect class="sk" x="1" y="1" width="20" height="22" rx="2"/><path class="sb" d="M11 5V18M6.500 13.500L11 18l4.500-4.500"/></svg>
      <svg width="22" height="22" viewBox="0 0 22 22"><path class="sk" d="M15 2H1V8H11V14H1V20H15"/><path class="sb" d="M13 11H21M18 8l3 3-3 3"/></svg>
      <span>插入</span>
      <svg width="19" height="24" viewBox="0 0 19 24"><path class="sk" d="M1 4H18M6 4V1H13V4M2 4V21Q2 23 4 23H15Q17 23 17 21V4"/><path d="M7 9V18M12 9V18" stroke="#e33" stroke-width="1.600"/></svg>
      <span>删除</span>
      <svg width="20" height="24" viewBox="0 0 20 24"><path class="sk" d="M2 1V16M7 5V16M12 9V16M17 12V16"/><path class="sb" d="M0.500 20H19.500M1 18V22M19 18V22"/></svg>
      <span>缩尺配筋</span>
      <svg width="23" height="24" viewBox="0 0 23 24"><path class="sk" d="M14 23H1V1H21V13"/><path d="M4 7h7M4 12h3M4 17h3M14 7h4M10 12h8" stroke="#555" stroke-width="1.400" stroke-dasharray="2 1.500"/><path class="sb" d="M22 15A5 5 0 1 1 16 21"/></svg>
      <span>钢筋信息</span>
      <svg width="21" height="24" viewBox="0 0 21 24"><rect class="sk" x="1" y="1" width="19" height="22" rx="2"/><path class="sk" d="M6 5V14M6 9C8 6 14 7 14 10V14"/><path class="sb" d="M4 18H17" stroke-dasharray="3 2"/></svg>
      <span>钢筋图库</span>
      <span>其他</span>
      <span class="tri"></span>
      <span>单构件钢筋总重(kg)：50.634</span>
    </div>

    <div class="grid-w">
      <table class="table rgt">
        <colgroup><col class="c0"><col class="c1"><col class="c2"><col class="c3"><col class="c4"><col class="c5"><col class="c6"><col class="c7"><col class="c8"><col class="c9"><col class="c10"><col class="c11"><col class="c12"><col class="c13"></colgroup>
        <thead><tr><th></th><th class="hc">筋号</th><th>直径(mm)</th><th>级别</th><th>图号</th><th>图形</th><th>计算公式</th><th>公式描述</th><th>长度</th><th>根数</th><th>搭接</th><th>损耗(%)</th><th>单重(kg)</th><th class="tl">总重(kg)</th></tr></thead>
        <tbody>
          <tr class="dt">
            <td class="rh rh-on">1</td><td class="selc">角筋.1</td><td>14</td><td><svg width="14" height="14" viewBox="0 0 14 14" class="mt-1"><use href="#rbs"/></svg></td><td>64</td>
            <td class="fg"><svg width="322" height="68" viewBox="0 0 322 68"><text class="fgt" x="53" y="41" text-anchor="end">210</text><path d="M60 22V48H284V22" fill="none" stroke="#111" stroke-width="3"/><text class="fgr" x="173" y="41" text-anchor="middle">740</text><text class="fgt" x="291" y="43">168</text></svg></td>
            <td class="fm">450+350-40+15*d-20+12*d</td><td class="ds">柱实际高度+基<br>础厚度-保护…</td><td>1118</td><td>4</td><td>0</td><td>0</td><td>1.353</td><td>5.412</td>
          </tr>
          <tr class="dt">
            <td class="rh">2</td><td class="nm">B边纵筋. 1</td><td>14</td><td><svg width="14" height="14" viewBox="0 0 14 14" class="mt-1"><use href="#rbs"/></svg></td><td>64</td>
            <td class="fg"><svg width="322" height="68" viewBox="0 0 322 68"><text class="fgt" x="53" y="41" text-anchor="end">210</text><path d="M60 22V48H284V22" fill="none" stroke="#111" stroke-width="3"/><text class="fgr" x="173" y="41" text-anchor="middle">740</text><text class="fgt" x="291" y="43">168</text></svg></td>
            <td class="fm">450+350-40+15*d-20+12*d</td><td class="ds">柱实际高度+基<br>础厚度-保护…</td><td>1118</td><td>2</td><td>0</td><td>0</td><td>1.353</td><td>2.706</td>
          </tr>
          <tr class="dt">
            <td class="rh">3</td><td class="nm">H边纵筋. 1</td><td>12</td><td><svg width="14" height="14" viewBox="0 0 14 14" class="mt-1"><use href="#rbs"/></svg></td><td>64</td>
            <td class="fg"><svg width="322" height="68" viewBox="0 0 322 68"><text class="fgt" x="53" y="41" text-anchor="end">180</text><path d="M60 22V48H284V22" fill="none" stroke="#111" stroke-width="3"/><text class="fgr" x="173" y="41" text-anchor="middle">740</text><text class="fgt" x="291" y="43">144</text></svg></td>
            <td class="fm">450+350-40+15*d-20+12*d</td><td class="ds">柱实际高度+基<br>础厚度-保护…</td><td>1064</td><td>2</td><td>0</td><td>0</td><td>0.945</td><td>1.89</td>
          </tr>
          <tr class="dt">
            <td class="rh">4</td><td class="nm">箍筋. 1</td><td>8</td><td><svg width="14" height="14" viewBox="0 0 14 14" class="mt-1"><use href="#rbs"/></svg></td><td>195</td>
            <td class="fg"><svg width="322" height="68" viewBox="0 0 322 68"><text x="104" y="44" text-anchor="middle" font-family="Liberation Sans,sans-serif" font-size="26" fill="#1d3c5e">360</text><rect x="157.500" y="5" width="91.500" height="60" fill="none" stroke="#111" stroke-width="3"/><path d="M237 7L214 23M246 18L231 37" stroke="#111" stroke-width="3" fill="none"/><text x="161" y="52" font-family="Liberation Sans,sans-serif" font-size="26" fill="#ff2d3c">360</text></svg></td>
            <td class="fm">2*(360+360)+2*(12.89*d)</td><td class="ds"></td><td>1646</td><td>37</td><td>0</td><td>0</td><td>0.65</td><td>24.05</td>
          </tr>
          <tr class="dt">
            <td class="rh">5</td><td class="nm">箍筋. 2</td><td>8</td><td><svg width="14" height="14" viewBox="0 0 14 14" class="mt-1"><use href="#rbs"/></svg></td><td>485</td>
            <td class="fg"><svg width="322" height="68" viewBox="0 0 322 68"><path d="M54 55L27 21V16Q27 14 29 14H313Q315 14 315 16V22L288 55" fill="none" stroke="#111" stroke-width="3"/><text x="163" y="43" text-anchor="middle" font-family="Liberation Sans,sans-serif" font-size="20" fill="#222">360</text></svg></td>
            <td class="fm">360+2*(12.89*d)</td><td class="ds"></td><td>566</td><td>74</td><td>0</td><td>0</td><td>0.224</td><td>16.576</td>
          </tr>
          <tr class="em"><td class="rh">6</td><td></td><td></td><td></td><td></td><td></td><td></td><td></td><td></td><td></td><td></td><td></td><td></td><td></td></tr>
        </tbody>
      </table>
      <div class="redbox"></div>
    </div>
  </div>
</div>

<div class="toast-b">
  <div class="toast-t d-flex align-items-center"><svg width="20" height="22" viewBox="0 0 20 22"><rect width="20" height="22" rx="2" fill="#222"/><rect x="3" y="3" width="6" height="7" fill="#ddd"/><rect x="11" y="3" width="6" height="7" fill="#ddd"/><rect x="3" y="12" width="6" height="7" fill="#ddd"/><rect x="11" y="12" width="6" height="7" fill="#ddd"/></svg><span>【君不闻大鱼乎：网络</span></div>
</div>

</div>
<script src="https://cdn.jsdelivr.net/npm/bootstrap@5.3.0/dist/js/bootstrap.bundle.min.js"></script>
</body>
</html>
